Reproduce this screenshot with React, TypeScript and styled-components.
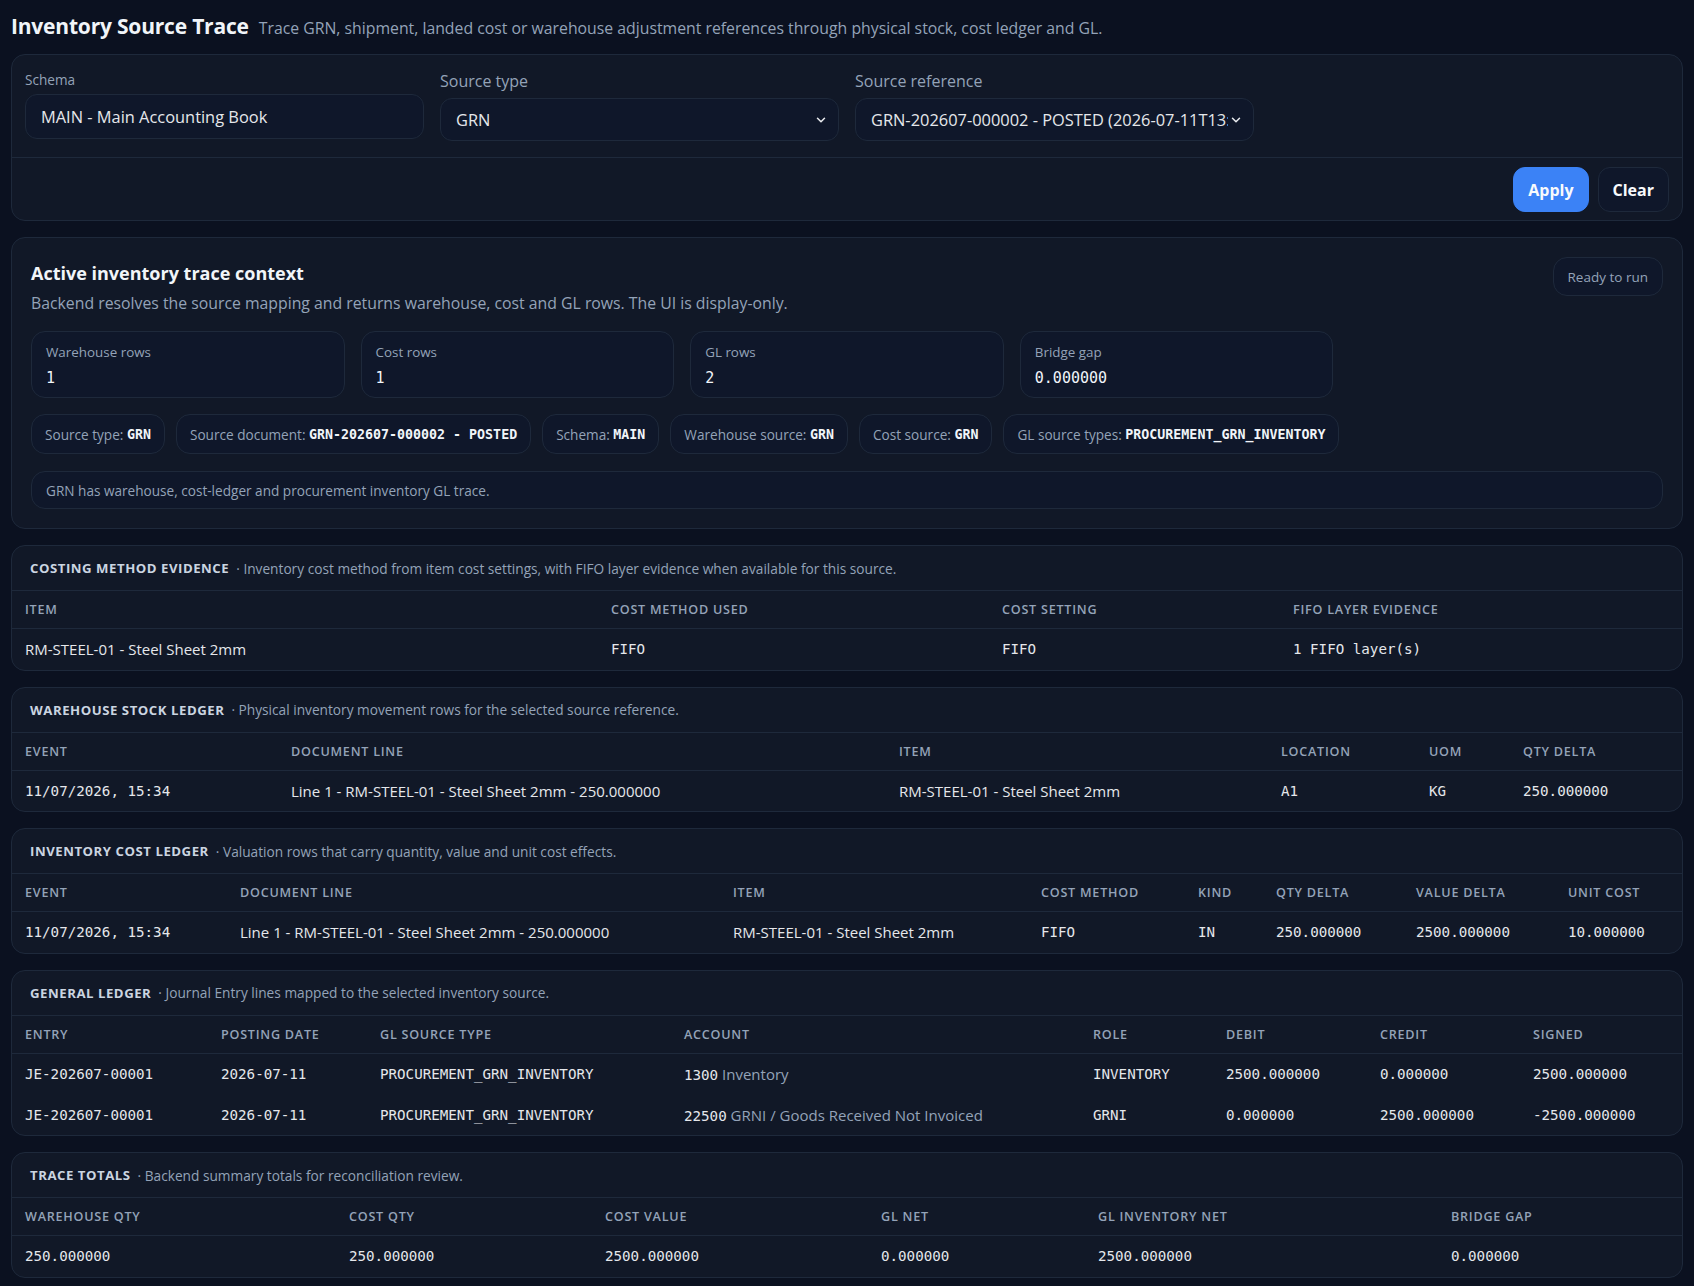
import React from "react";
import styled, { createGlobalStyle } from "styled-components";

const GlobalStyle = createGlobalStyle`
  * { box-sizing: border-box; }
  html, body { margin: 0; padding: 0; background: #0b1120; }
  body {
    font-family: "Open Sans", "Noto Sans", sans-serif;
    color: #e5e7eb;
  }
`;

const MONO = `"DejaVu Sans Mono", "Liberation Mono", monospace`;

const Page = styled.div`
  padding: 12px 11px 14px;
  display: flex;
  flex-direction: column;
  gap: 16px;
`;

const Header = styled.header`
  display: flex;
  align-items: baseline;
  gap: 10px;
  margin-bottom: -2px;
`;

const Title = styled.h1`
  margin: 0;
  font-size: 21px;
  font-weight: 700;
  color: #f1f5f9;
  letter-spacing: -0.2px;
`;

const Subtitle = styled.span`
  font-size: 15.8px;
  color: #94a3b8;
`;

const Panel = styled.section`
  background: #111827;
  border: 1px solid #1e293b;
  border-radius: 14px;
  overflow: hidden;
`;

const FieldsGrid = styled.div`
  display: grid;
  grid-template-columns: repeat(4, minmax(0, 1fr));
  gap: 16px;
  padding: 16px 13px 16px;
  align-items: start;
`;

const Field = styled.label<{ $small?: boolean }>`
  display: flex;
  flex-direction: column;
  min-width: 0;
  gap: ${(p) => (p.$small ? "5px" : "6px")};
`;

const FieldLabel = styled.span<{ $small?: boolean }>`
  font-size: ${(p) => (p.$small ? "13.6px" : "16px")};
  line-height: ${(p) => (p.$small ? "18px" : "21px")};
  color: #94a3b8;
`;

const InputBox = styled.div<{ $tall?: boolean }>`
  height: ${(p) => (p.$tall ? "45px" : "43px")};
  border: 1px solid #1e293b;
  background: #0f172a;
  border-radius: 12px;
  display: flex;
  align-items: center;
  padding: 0 10px 0 15px;
  font-size: 16.4px;
  color: #e5e7eb;
  gap: 1px;
  min-width: 0;
`;

const BoxText = styled.span`
  flex: 1;
  min-width: 0;
  overflow: hidden;
  white-space: nowrap;
`;

const Chevron = styled.svg`
  flex: none;
  width: 14px;
  height: 14px;
  color: #e5e7eb;
`;

const Divider = styled.div`
  border-top: 1px solid #1e293b;
`;

const Actions = styled.div`
  display: flex;
  justify-content: flex-end;
  gap: 9px;
  padding: 9px 13px 8px;
`;

const Button = styled.button<{ $primary?: boolean }>`
  height: 45px;
  padding: 0 14px;
  border-radius: 12px;
  font-family: inherit;
  font-size: 16px;
  font-weight: 700;
  color: #f8fafc;
  cursor: pointer;
  background: ${(p) => (p.$primary ? "#3b82f6" : "#0f172a")};
  border: 1px solid ${(p) => (p.$primary ? "#3b82f6" : "#1e293b")};
`;

const ContextBody = styled.div`
  padding: 19px;
  display: flex;
  flex-direction: column;
  gap: 16px;
`;

const ContextHead = styled.div`
  display: flex;
  justify-content: space-between;
  align-items: flex-start;
`;

const ContextTitle = styled.h2`
  margin: 3px 0 0;
  font-size: 18px;
  line-height: 26px;
  font-weight: 700;
  color: #f1f5f9;
`;

const ContextDesc = styled.p`
  margin: 5px 0 0;
  font-size: 15.8px;
  line-height: 24px;
  color: #94a3b8;
`;

const Pill = styled.span`
  height: 39px;
  display: inline-flex;
  align-items: center;
  padding: 0 14px;
  border: 1px solid #1e293b;
  background: #0f172a;
  border-radius: 14px;
  font-size: 13.5px;
  color: #94a3b8;
`;

const StatsGrid = styled.div`
  display: grid;
  grid-template-columns: repeat(5, minmax(0, 1fr));
  gap: 16px;
`;

const StatCard = styled.div`
  height: 67px;
  border: 1px solid #1e293b;
  background: #0f172a;
  border-radius: 14px;
  padding: 10px 14px;
  display: flex;
  flex-direction: column;
  gap: 5px;
`;

const StatLabel = styled.span`
  font-size: 13.4px;
  line-height: 20px;
  color: #94a3b8;
`;

const StatValue = styled.span`
  font-family: ${MONO};
  font-size: 15px;
  line-height: 22px;
  color: #f1f5f9;
`;

const Chips = styled.div`
  display: flex;
  flex-wrap: wrap;
  gap: 11px;
`;

const Chip = styled.span`
  height: 40px;
  display: inline-flex;
  align-items: center;
  padding: 0 13px;
  border: 1px solid #1e293b;
  background: #0f172a;
  border-radius: 14px;
  font-size: 13.6px;
  color: #94a3b8;
  white-space: pre;
`;

const ChipValue = styled.span`
  font-family: ${MONO};
  font-size: 13.3px;
  font-weight: 700;
  color: #f1f5f9;
`;

const Note = styled.div`
  height: 38px;
  display: flex;
  align-items: center;
  padding: 0 14px;
  border: 1px solid #1e293b;
  background: #0f172a;
  border-radius: 14px;
  font-size: 13.6px;
  color: #94a3b8;
  margin-top: 1px;
`;

const SectionHead = styled.div`
  height: 44px;
  display: flex;
  align-items: center;
  gap: 7px;
  padding: 0 18px;
`;

const SectionTitle = styled.span`
  font-size: 13.2px;
  font-weight: 700;
  letter-spacing: 0.04em;
  text-transform: uppercase;
  color: #cbd5e1;
`;

const SectionSub = styled.span`
  font-size: 13.7px;
  color: #94a3b8;
`;

const Table = styled.table`
  width: 100%;
  border-collapse: collapse;
  table-layout: fixed;
`;

const Col = styled.col<{ $w: number }>`
  width: ${(p) => p.$w}px;
`;

const Th = styled.th`
  height: 38px;
  padding: 0 13px;
  text-align: left;
  font-size: 12.6px;
  font-weight: 600;
  letter-spacing: 0.06em;
  text-transform: uppercase;
  color: #94a3b8;
  border-top: 1px solid #1e293b;
  border-bottom: 1px solid #1e293b;
  white-space: nowrap;
`;

const Td = styled.td<{ $mono?: boolean }>`
  height: 41px;
  padding: 0 13px;
  font-family: ${(p) => (p.$mono ? MONO : "inherit")};
  font-size: ${(p) => (p.$mono ? "14.2px" : "15px")};
  color: #e5e7eb;
  white-space: nowrap;
`;

const Muted = styled.span`
  font-family: "Open Sans", sans-serif;
  font-size: 15px;
  color: #94a3b8;
`;

const ChevronDown = () => (
  <Chevron viewBox="0 0 24 24" fill="none" stroke="currentColor" strokeWidth={2.6} strokeLinecap="round" strokeLinejoin="round">
    <path d="m6 9 6 6 6-6" />
  </Chevron>
);

type Cell = { v: React.ReactNode; mono?: boolean };

type SectionProps = {
  title: string;
  sub: string;
  widths: number[];
  headers: string[];
  rows: Cell[][];
};

const Section = ({ title, sub, widths, headers, rows }: SectionProps) => (
  <Panel>
    <SectionHead>
      <SectionTitle>{title}</SectionTitle>
      <SectionSub>· {sub}</SectionSub>
    </SectionHead>
    <Table>
      <colgroup>
        {widths.map((w, i) => (
          <Col key={i} $w={w} />
        ))}
      </colgroup>
      <thead>
        <tr>
          {headers.map((h) => (
            <Th key={h}>{h}</Th>
          ))}
        </tr>
      </thead>
      <tbody>
        {rows.map((r, i) => (
          <tr key={i}>
            {r.map((c, j) => (
              <Td key={j} $mono={c.mono}>
                {c.v}
              </Td>
            ))}
          </tr>
        ))}
      </tbody>
    </Table>
  </Panel>
);

const s = (v: React.ReactNode): Cell => ({ v });
const m = (v: React.ReactNode): Cell => ({ v, mono: true });

export default function App() {
  return (
    <>
      <GlobalStyle />
      <Page>
        <Header>
          <Title>Inventory Source Trace</Title>
          <Subtitle>
            Trace GRN, shipment, landed cost or warehouse adjustment references through physical stock, cost ledger and GL.
          </Subtitle>
        </Header>

        <Panel>
          <FieldsGrid>
            <Field $small>
              <FieldLabel $small>Schema</FieldLabel>
              <InputBox $tall>
                <BoxText>MAIN - Main Accounting Book</BoxText>
              </InputBox>
            </Field>
            <Field>
              <FieldLabel>Source type</FieldLabel>
              <InputBox>
                <BoxText>GRN</BoxText>
                <ChevronDown />
              </InputBox>
            </Field>
            <Field>
              <FieldLabel>Source reference</FieldLabel>
              <InputBox>
                <BoxText>GRN-202607-000002 - POSTED (2026-07-11T13:50:00)</BoxText>
                <ChevronDown />
              </InputBox>
            </Field>
          </FieldsGrid>
          <Divider />
          <Actions>
            <Button $primary>Apply</Button>
            <Button>Clear</Button>
          </Actions>
        </Panel>

        <Panel>
          <ContextBody>
            <ContextHead>
              <div>
                <ContextTitle>Active inventory trace context</ContextTitle>
                <ContextDesc>
                  Backend resolves the source mapping and returns warehouse, cost and GL rows. The UI is display-only.
                </ContextDesc>
              </div>
              <Pill>Ready to run</Pill>
            </ContextHead>
            <StatsGrid>
              <StatCard>
                <StatLabel>Warehouse rows</StatLabel>
                <StatValue>1</StatValue>
              </StatCard>
              <StatCard>
                <StatLabel>Cost rows</StatLabel>
                <StatValue>1</StatValue>
              </StatCard>
              <StatCard>
                <StatLabel>GL rows</StatLabel>
                <StatValue>2</StatValue>
              </StatCard>
              <StatCard>
                <StatLabel>Bridge gap</StatLabel>
                <StatValue>0.000000</StatValue>
              </StatCard>
            </StatsGrid>
            <Chips>
              <Chip>
                Source type: <ChipValue>GRN</ChipValue>
              </Chip>
              <Chip>
                Source document: <ChipValue>GRN-202607-000002 - POSTED</ChipValue>
              </Chip>
              <Chip>
                Schema: <ChipValue>MAIN</ChipValue>
              </Chip>
              <Chip>
                Warehouse source: <ChipValue>GRN</ChipValue>
              </Chip>
              <Chip>
                Cost source: <ChipValue>GRN</ChipValue>
              </Chip>
              <Chip>
                GL source types: <ChipValue>PROCUREMENT_GRN_INVENTORY</ChipValue>
              </Chip>
            </Chips>
            <Note>GRN has warehouse, cost-ledger and procurement inventory GL trace.</Note>
          </ContextBody>
        </Panel>

        <Section
          title="Costing method evidence"
          sub="Inventory cost method from item cost settings, with FIFO layer evidence when available for this source."
          widths={[586, 391, 291, 402]}
          headers={["Item", "Cost method used", "Cost setting", "FIFO layer evidence"]}
          rows={[[s("RM-STEEL-01 - Steel Sheet 2mm"), m("FIFO"), m("FIFO"), m("1 FIFO layer(s)")]]}
        />

        <Section
          title="Warehouse stock ledger"
          sub="Physical inventory movement rows for the selected source reference."
          widths={[266, 608, 382, 148, 94, 172]}
          headers={["Event", "Document line", "Item", "Location", "UOM", "Qty delta"]}
          rows={[
            [
              m("11/07/2026, 15:34"),
              s("Line 1 - RM-STEEL-01 - Steel Sheet 2mm - 250.000000"),
              s("RM-STEEL-01 - Steel Sheet 2mm"),
              m("A1"),
              m("KG"),
              m("250.000000"),
            ],
          ]}
        />

        <Section
          title="Inventory cost ledger"
          sub="Valuation rows that carry quantity, value and unit cost effects."
          widths={[215, 493, 308, 157, 78, 140, 152, 127]}
          headers={["Event", "Document line", "Item", "Cost method", "Kind", "Qty delta", "Value delta", "Unit cost"]}
          rows={[
            [
              m("11/07/2026, 15:34"),
              s("Line 1 - RM-STEEL-01 - Steel Sheet 2mm - 250.000000"),
              s("RM-STEEL-01 - Steel Sheet 2mm"),
              m("FIFO"),
              m("IN"),
              m("250.000000"),
              m("2500.000000"),
              m("10.000000"),
            ],
          ]}
        />

        <Section
          title="General ledger"
          sub="Journal Entry lines mapped to the selected inventory source."
          widths={[196, 159, 304, 409, 133, 154, 153, 162]}
          headers={["Entry", "Posting date", "GL source type", "Account", "Role", "Debit", "Credit", "Signed"]}
          rows={[
            [
              m("JE-202607-00001"),
              m("2026-07-11"),
              m("PROCUREMENT_GRN_INVENTORY"),
              m(
                <>
                  1300<Muted> Inventory</Muted>
                </>
              ),
              m("INVENTORY"),
              m("2500.000000"),
              m("0.000000"),
              m("2500.000000"),
            ],
            [
              m("JE-202607-00001"),
              m("2026-07-11"),
              m("PROCUREMENT_GRN_INVENTORY"),
              m(
                <>
                  22500<Muted> GRNI / Goods Received Not Invoiced</Muted>
                </>
              ),
              m("GRNI"),
              m("0.000000"),
              m("2500.000000"),
              m("-2500.000000"),
            ],
          ]}
        />

        <Section
          title="Trace totals"
          sub="Backend summary totals for reconciliation review."
          widths={[324, 256, 276, 217, 353, 244]}
          headers={["Warehouse qty", "Cost qty", "Cost value", "GL net", "GL inventory net", "Bridge gap"]}
          rows={[[m("250.000000"), m("250.000000"), m("2500.000000"), m("0.000000"), m("2500.000000"), m("0.000000")]]}
        />
      </Page>
    </>
  );
}
